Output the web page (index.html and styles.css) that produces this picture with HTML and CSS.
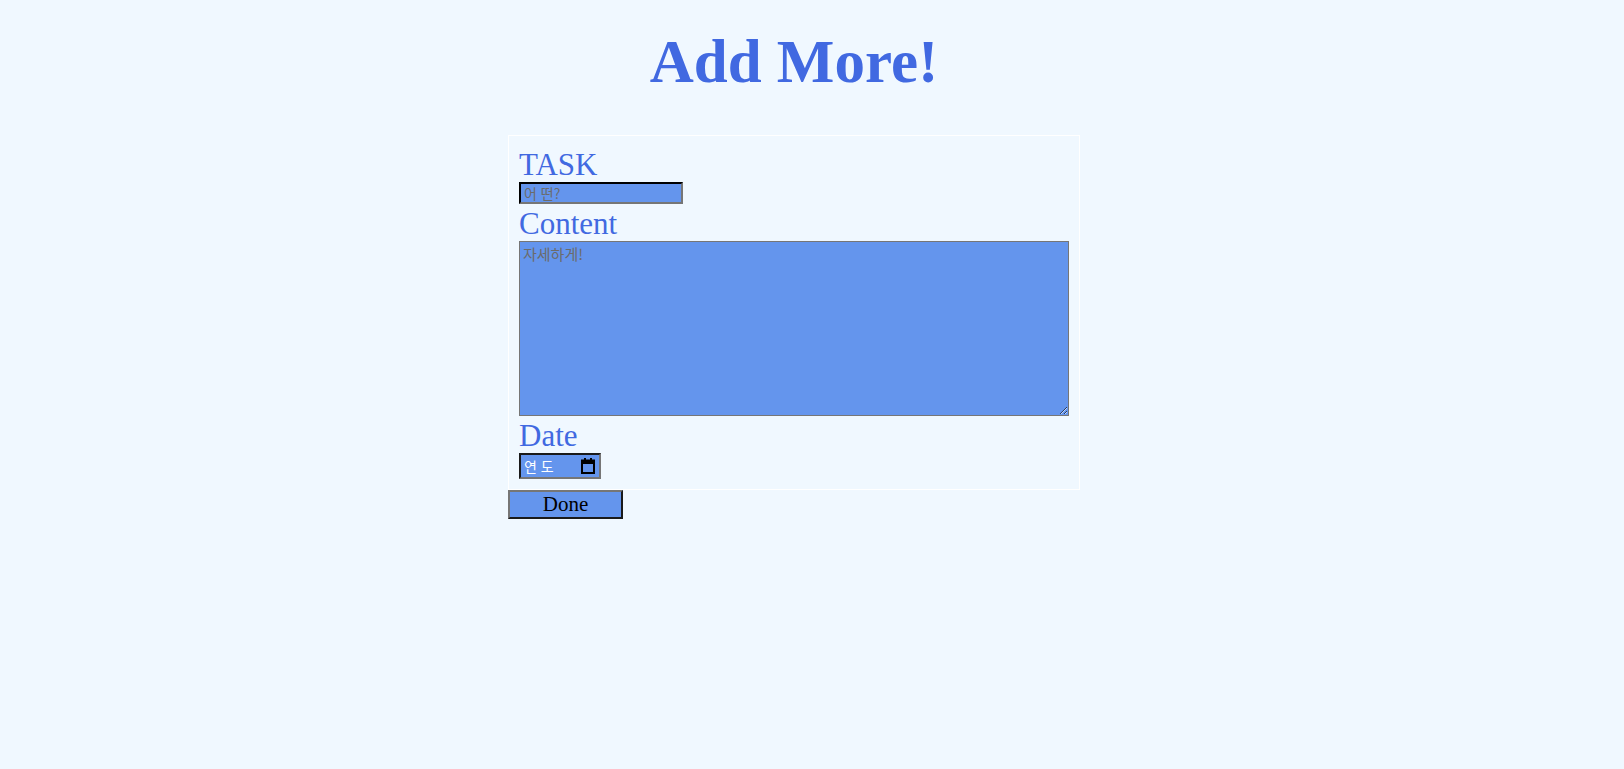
FILE: index.html
```html
<!DOCTYPE html>
<html lang="ko">
<head>
<meta charset="utf-8">
<title>Add More!</title>
<link rel="stylesheet" href="styles.css">
</head>
<body>
<h1 class="title">Add More!</h1>
<form class="form">
  <fieldset class="box">
    <label class="label" for="task">TASK</label>
    <input class="task-input" id="task" type="text" placeholder="어 떤?">
    <label class="label" for="content">Content</label>
    <textarea class="content-input" id="content" placeholder="자세하게!"></textarea>
    <label class="label">Date</label>
    <span class="date-input"><span class="date-text">연 도</span><svg class="cal" width="14" height="16" viewBox="0 0 14 16"><rect x="1" y="2.5" width="12" height="12.5" fill="none" stroke="#000" stroke-width="2"/><rect x="1" y="2" width="12" height="4" fill="#000"/><rect x="3" y="0" width="2" height="3" fill="#000"/><rect x="9" y="0" width="2" height="3" fill="#000"/></svg></span>
  </fieldset>
  <button class="done" type="button">Done</button>
</form>
</body>
</html>
```
FILE: styles.css
```css
html, body {
  margin: 0;
  padding: 0;
}
body {
  background: #f0f8ff;
  font-family: "Liberation Serif", "Noto Sans CJK KR", serif;
  color: #4169e1;
  padding-top: 1px;
}
.title {
  text-align: center;
  font-size: 61px;
  font-weight: bold;
  margin: 19px 0 0;
  padding-right: 36px;
  line-height: 84px;
}
.form {
  width: 576px;
  margin: 31px 0 0 506px;
}
.box {
  margin: 0 2px;
  border: 1px solid #ffffff;
  padding: 9px 10px 10px;
  display: flex;
  flex-direction: column;
  align-items: flex-start;
}
.label {
  font-size: 31px;
  line-height: 34px;
  padding-top: 3px;
  display: block;
}
.task-input {
  width: 164px;
  height: 22px;
  box-sizing: border-box;
  background: #6495ed;
  border: 2px inset #767676;
  border-color: #1a1a1a #767676 #767676 #1a1a1a;
  font-family: "Noto Sans CJK KR", sans-serif;
  font-size: 14px;
  padding: 0 3px;
  margin: 0;
}
.task-input::placeholder, .content-input::placeholder {
  color: #6b6b6b;
}
.content-input {
  width: 550px;
  height: 175px;
  box-sizing: border-box;
  background: #6495ed;
  border: 1px solid #767676;
  font-family: "Noto Sans CJK KR", sans-serif;
  font-size: 15px;
  padding: 1px 3px;
  margin: 0;
  resize: both;
}
.date-input {
  width: 82px;
  height: 26px;
  box-sizing: border-box;
  background: #6495ed;
  border: 2px solid;
  border-color: #1a1a1a #767676 #767676 #1a1a1a;
  display: flex;
  align-items: center;
  justify-content: space-between;
  padding: 0 4px 0 3px;
  color: #ffffff;
  font-family: "Noto Sans CJK KR", sans-serif;
  font-size: 14px;
}
.cal {
  display: block;
}
.done {
  display: block;
  width: 115px;
  height: 29px;
  background: #6495ed;
  border: 2px solid;
  border-color: #767676 #1a1a1a #1a1a1a #767676;
  font-family: "Liberation Serif", serif;
  font-size: 21px;
  color: #000;
  padding: 0;
  margin: 0 0 0 2px;
}
```
